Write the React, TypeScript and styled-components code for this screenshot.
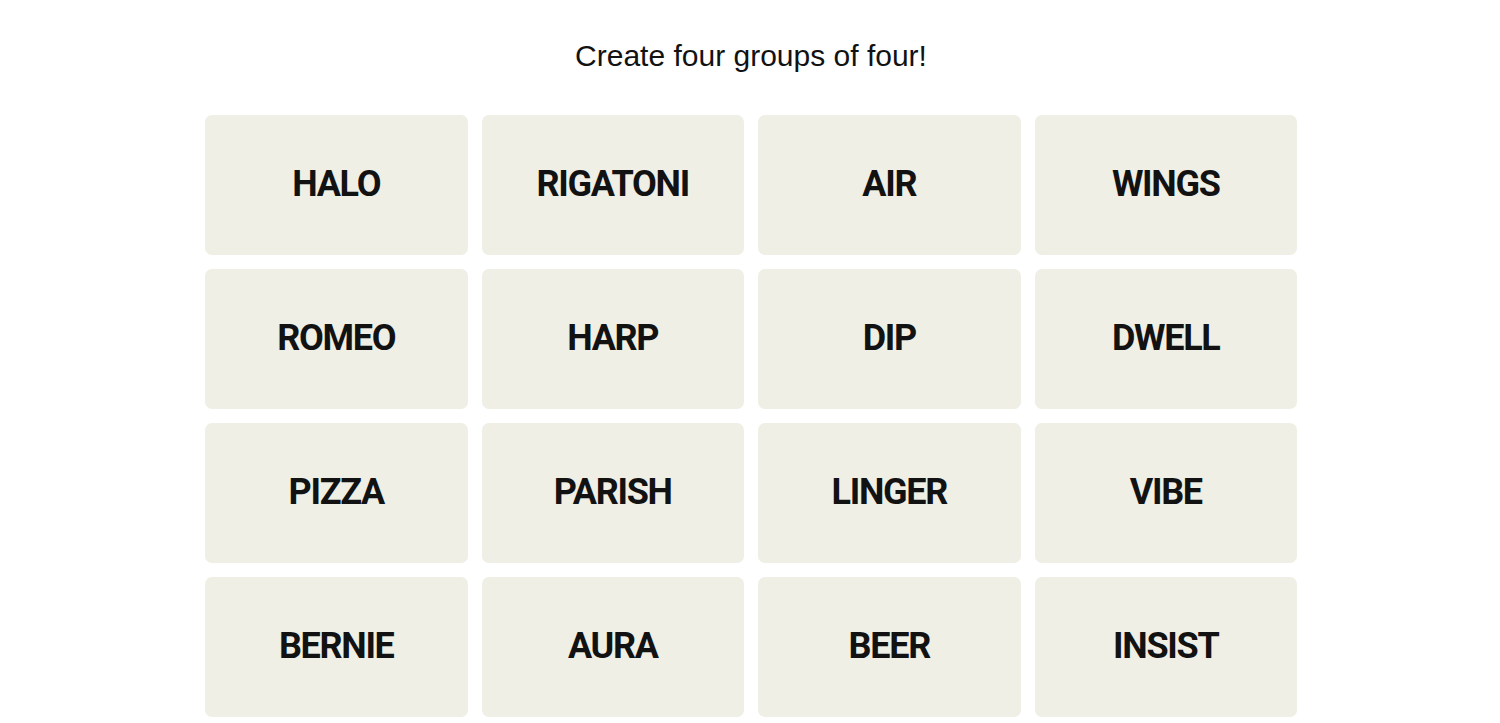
import React from "react";
import styled, { createGlobalStyle } from "styled-components";

const Global = createGlobalStyle`
  html, body { margin: 0; padding: 0; background: #ffffff; }
  body { font-family: "Liberation Sans", Arial, sans-serif; color: #121212; }
`;

const Page = styled.main`
  display: flex;
  flex-direction: column;
  align-items: center;
  padding-top: 37px;
  padding-left: 2px;
`;

const Prompt = styled.h1`
  margin: 0 0 40px;
  font-family: "Liberation Sans", Arial, sans-serif;
  font-weight: 400;
  font-size: 30px;
  line-height: 38px;
  color: #121212;
`;

const Board = styled.section`
  display: grid;
  grid-template-columns: repeat(4, 262.5px);
  grid-auto-rows: 140px;
  gap: 14px;
`;

const Tile = styled.button`
  display: flex;
  align-items: center;
  justify-content: center;
  border: none;
  border-radius: 7px;
  background: #efefe6;
  color: #121212;
  font-family: Roboto, "Liberation Sans", sans-serif;
  font-weight: 700;
  font-size: 36px;
  letter-spacing: -1.3px;
  line-height: 1;
  text-transform: uppercase;
  padding: 0 0 3px;
  cursor: pointer;
`;

const words = [
  "HALO", "RIGATONI", "AIR", "WINGS",
  "ROMEO", "HARP", "DIP", "DWELL",
  "PIZZA", "PARISH", "LINGER", "VIBE",
  "BERNIE", "AURA", "BEER", "INSIST",
];

export default function App() {
  return (
    <>
      <Global />
      <Page>
        <Prompt>Create four groups of four!</Prompt>
        <Board>
          {words.map((w) => (
            <Tile key={w}>{w}</Tile>
          ))}
        </Board>
      </Page>
    </>
  );
}
